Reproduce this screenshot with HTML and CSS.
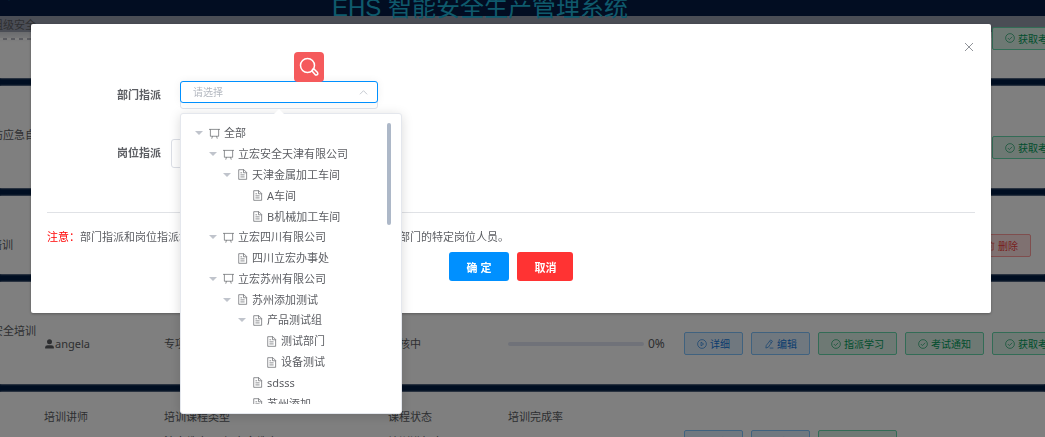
FILE: index.html
```html
<!DOCTYPE html>
<html lang="zh-CN">
  <head>
    <meta charset="UTF-8" />
    <title>EHS 智能安全生产管理系统</title>
    <link rel="stylesheet" href="styles.css" />
  </head>
  <body>
    <!-- shared icons -->
    <svg class="sprite" viewBox="0 0 16 16">
      <symbol id="i-board" viewBox="0 0 16 16"><path d="M0 2h16M2 2v10h12V2M5 12 4 15.500M11 12l1 3.500" /></symbol>
      <symbol id="i-doc" viewBox="0 0 16 16"><path d="M2.500 1h7.500L14 5v10H2.500zM9.500 1v4.500h4.500M5 5.500h2.500M5 8.500h6M5 11.500h6" /></symbol>
      <symbol id="i-play" viewBox="0 0 16 16"><circle cx="8" cy="8" r="7" /><path d="M6.500 5v6l4-3z" /></symbol>
      <symbol id="i-edit" viewBox="0 0 16 16"><path d="M10.500 1.500l3 2-6.500 9.500-4 1.500.500-4zM9 4l3 2M9 14.500h6" /></symbol>
      <symbol id="i-check" viewBox="0 0 16 16"><circle cx="8" cy="8" r="7" /><path d="M4.500 8l2.500 2.500L11.500 6" /></symbol>
      <symbol id="i-trash" viewBox="0 0 16 16"><path d="M1 3.500h14M5.500 3.500v-2h5v2M3 3.500v11h10v-11M6.500 6.500v5M9.500 6.500v5" /></symbol>
      <symbol id="i-user" viewBox="0 0 16 16"><circle cx="8" cy="4.500" r="4" /><path d="M1 15v-2q0-3 4-3h6q4 0 4 3v2z" /></symbol>
    </svg>

    <header class="header">
      <span class="header-user">培训管理</span>
      <h1 class="header-title">EHS 智能安全生产管理系统</h1>
    </header>

    <main class="course-list">
      <section class="card card-first">
        <div class="name">班组级安全</div>
        <div class="actions">
          <button class="btn blue"><svg><use href="#i-play" /></svg>详细</button>
          <button class="btn blue"><svg><use href="#i-edit" /></svg>编辑</button>
          <button class="btn green"><svg><use href="#i-check" /></svg>指派学习</button>
          <button class="btn green"><svg><use href="#i-check" /></svg>考试通知</button>
          <button class="btn green"><svg><use href="#i-check" /></svg>获取考题</button>
        </div>
      </section>

      <section class="card card-tall">
        <div class="name">消防应急自</div>
        <div class="label">培训讲师</div>
        <div class="label">培训课程类型</div>
        <div class="label">课程状态</div>
        <div class="label">培训完成率</div>
        <div class="value"><svg class="user"><use href="#i-user" /></svg>angela</div>
        <div class="value">专项培训</div>
        <div class="value">审核中</div>
        <div class="value"><span class="progress"></span><span class="percent">0%</span></div>
        <div class="actions">
          <button class="btn blue"><svg><use href="#i-play" /></svg>详细</button>
          <button class="btn blue"><svg><use href="#i-edit" /></svg>编辑</button>
          <button class="btn green"><svg><use href="#i-check" /></svg>指派学习</button>
          <button class="btn green"><svg><use href="#i-check" /></svg>考试通知</button>
          <button class="btn green"><svg><use href="#i-check" /></svg>获取考题</button>
        </div>
      </section>

      <section class="card">
        <div class="name name-short">培训</div>
        <div class="label">培训讲师</div>
        <div class="label">培训课程类型</div>
        <div class="label">课程状态</div>
        <div class="label">培训完成率</div>
        <div class="value"></div>
        <div class="value"></div>
        <div class="value"></div>
        <div class="value"></div>
        <div class="actions">
          <button class="btn blue"><svg><use href="#i-play" /></svg>详细</button>
          <button class="btn blue"><svg><use href="#i-edit" /></svg>编辑</button>
          <button class="btn green"><svg><use href="#i-check" /></svg>指派学习</button>
          <button class="btn green"><svg><use href="#i-check" /></svg>发布</button>
          <button class="btn red"><svg><use href="#i-trash" /></svg>删除</button>
        </div>
      </section>

      <section class="card card-tall">
        <div class="name">安全培训</div>
        <div class="label">培训讲师</div>
        <div class="label">培训课程类型</div>
        <div class="label">课程状态</div>
        <div class="label">培训完成率</div>
        <div class="value"><svg class="user"><use href="#i-user" /></svg>angela</div>
        <div class="value">专项培训</div>
        <div class="value">审核中</div>
        <div class="value"><span class="progress"></span><span class="percent">0%</span></div>
        <div class="actions">
          <button class="btn blue"><svg><use href="#i-play" /></svg>详细</button>
          <button class="btn blue"><svg><use href="#i-edit" /></svg>编辑</button>
          <button class="btn green"><svg><use href="#i-check" /></svg>指派学习</button>
          <button class="btn green"><svg><use href="#i-check" /></svg>考试通知</button>
          <button class="btn green"><svg><use href="#i-check" /></svg>获取考题</button>
        </div>
      </section>

      <section class="card">
        <div class="name"></div>
        <div class="label">培训讲师</div>
        <div class="label">培训课程类型</div>
        <div class="label">课程状态</div>
        <div class="label">培训完成率</div>
        <div class="value"><svg class="user"><use href="#i-user" /></svg>angela</div>
        <div class="value">法人教育/三级安全教育</div>
        <div class="value">培训进行中</div>
        <div class="value"><span class="progress"></span><span class="percent">0%</span></div>
        <div class="actions">
          <button class="btn blue"><svg><use href="#i-play" /></svg>详细</button>
          <button class="btn blue"><svg><use href="#i-edit" /></svg>编辑</button>
          <button class="btn green"><svg><use href="#i-check" /></svg>指派学习</button>
        </div>
      </section>
    </main>

    <div class="overlay">
      <div class="dialog" role="dialog" aria-label="指派学习">
        <button class="close" aria-label="关闭">
          <svg viewBox="0 0 10 10"><path d="M1 1l8 8M9 1L1 9" /></svg>
        </button>
        <form>
          <div class="form-row">
            <label for="dept">部门指派</label>
            <div class="dept-select">
              <input type="text" id="dept" role="combobox" aria-expanded="true" aria-controls="deptTree" placeholder="请选择" readonly />
              <svg class="arrow" viewBox="0 0 10 10"><path d="M1 7l4-4 4 4" /></svg>
              <button type="button" class="search" aria-label="搜索">
                <svg viewBox="0 0 20 20"><circle cx="8.500" cy="8.500" r="7" /><path d="M13.500 12.500l1-1 4 4q1 2-1 2.500h-1l-3.500-4z" /></svg>
              </button>

              <div class="dropdown">
                <div class="tree-wrap">
                  <ul class="tree" id="deptTree">
                    <li class="open"><svg><use href="#i-board" /></svg>全部</li>
                    <li class="open lv1"><svg><use href="#i-board" /></svg>立宏安全天津有限公司</li>
                    <li class="open lv2"><svg><use href="#i-doc" /></svg>天津金属加工车间</li>
                    <li class="lv3"><svg><use href="#i-doc" /></svg>A车间</li>
                    <li class="lv3"><svg><use href="#i-doc" /></svg>B机械加工车间</li>
                    <li class="open lv1"><svg><use href="#i-board" /></svg>立宏四川有限公司</li>
                    <li class="lv2"><svg><use href="#i-doc" /></svg>四川立宏办事处</li>
                    <li class="open lv1"><svg><use href="#i-board" /></svg>立宏苏州有限公司</li>
                    <li class="open lv2"><svg><use href="#i-doc" /></svg>苏州添加测试</li>
                    <li class="open lv3"><svg><use href="#i-doc" /></svg>产品测试组</li>
                    <li class="lv4"><svg><use href="#i-doc" /></svg>测试部门</li>
                    <li class="lv4"><svg><use href="#i-doc" /></svg>设备测试</li>
                    <li class="lv3"><svg><use href="#i-doc" /></svg>sdsss</li>
                    <li class="lv3"><svg><use href="#i-doc" /></svg>苏州添加</li>
                  </ul>
                  <span class="thumb"></span>
                </div>
              </div>
            </div>
          </div>
          <div class="form-row">
            <label for="post">岗位指派</label>
            <select id="post" class="post-select"><option value=""></option></select>
          </div>
          <hr />
          <p class="note"><span>注意：</span>部门指派和岗位指派均为必选项，选择完成后将会指派给所选择的部门的特定岗位人员。</p>
          <div class="footer">
            <button type="submit" class="ok">确 定</button>
            <button type="button" class="cancel">取消</button>
          </div>
        </form>
      </div>
    </div>
  </body>
</html>
```
FILE: styles.css
```css
* {
  box-sizing: border-box;
}
body {
  margin: 0;
  height: 100vh;
  overflow: hidden;
  background: #001d44;
  color: #5c5e63;
  font-family: "Noto Sans", "Noto Sans CJK SC", sans-serif;
  font-size: 11px;
  line-height: 16px;
}
button,
input,
select {
  font-family: inherit;
  margin: 0;
}
svg {
  fill: none;
  stroke: currentColor;
  flex: none;
}
.sprite {
  display: none;
}

/* header */
.header {
  position: relative;
  z-index: 1;
  display: flex;
  justify-content: center;
  height: 56px;
  margin-top: -40px;
  padding-right: 85px;
  background: #041a44;
  color: #1eb4d8;
}
.header-user {
  position: absolute;
  left: 4px;
  top: 27px;
}
.header-title {
  margin: 0;
  padding-top: 32px;
  font: 400 24px/32px "Liberation Sans", "Noto Sans CJK SC", sans-serif;
  white-space: nowrap;
}

/* course cards */
.course-list {
  display: flex;
  flex-direction: column;
  gap: 8px;
}
.card {
  display: grid;
  grid-template-columns: 44px 120px 224px 120px 176px auto;
  grid-template-rows: 16px 33px;
  padding: 17px 0 12px;
  background: #fff;
  box-shadow: 0 0 2px #fff;
  white-space: nowrap;
}
.card-tall {
  grid-template-rows: 16px 57px;
}
.card-first {
  display: flex;
  justify-content: space-between;
  height: 62px;
  padding: 1px 0 0;
  background: repeating-linear-gradient(90deg, #fff 0 3px, #b4b6c0 3px 7px, #fff 7px 8px) 0 22px / 100% 2px no-repeat,
    linear-gradient(#959aab 16px, #d4d6dc 16px, #fff 26px);
}
.card-first .actions {
  flex: none;
  width: 361px;
  height: 42px;
}
.name {
  grid-row: 1 / 3;
  display: flex;
  justify-content: flex-end;
  width: 36px;
  padding-top: 24px;
}
.card-first .name {
  padding-top: 0;
}
.name-short {
  width: 13px;
}
.label {
  grid-row: 1;
}
.value {
  grid-row: 2;
  display: flex;
  align-items: center;
}
.user {
  width: 11px;
  height: 10px;
  fill: currentColor;
  stroke: none;
}
.progress {
  width: 136px;
  height: 4px;
  border-radius: 2px;
  background: #e0e5f2;
}
.percent {
  margin-left: 4px;
  font-size: 12px;
}
.actions {
  grid-row: 2;
  grid-column: 6;
  display: flex;
  align-items: center;
  gap: 8px;
}
.btn {
  display: flex;
  flex: none;
  align-items: center;
  gap: 3px;
  height: 23px;
  padding: 0 12px;
  border: 1px solid;
  border-radius: 2px;
  font-size: 10px;
}
.btn svg {
  width: 10px;
  height: 10px;
}
.blue {
  color: #1278dc;
  background: #e0f0ff;
  border-color: #80c4ff;
}
.green {
  color: #009c5a;
  background: #dcf3e8;
  border-color: #66d9ac;
}
.red {
  color: #f04040;
  background: #ffe2e2;
  border-color: #ff9c9c;
}

/* dialog */
.overlay {
  position: fixed;
  inset: 0;
  z-index: 10;
  padding: 24px 54px 0 31px;
  background: rgba(0, 0, 0, 0.5);
}
.dialog {
  position: relative;
  padding: 57px 16px 32px;
  background: #fff;
  border-radius: 2px;
  box-shadow: 0 1px 3px rgba(0, 0, 0, 0.3);
}
.close {
  position: absolute;
  top: 16px;
  right: 17px;
  padding: 0;
  border: 0;
  background: none;
  color: #909399;
}
.close svg {
  display: block;
  width: 10px;
  height: 14px;
}
.form-row {
  display: flex;
  align-items: flex-start;
  height: 29px;
  margin-bottom: 29px;
}
.form-row label {
  width: 114px;
  padding-top: 6px;
  font-weight: 700;
  text-align: right;
}
.dept-select {
  position: relative;
  width: 198px;
  height: 28px;
  margin-left: 19px;
  border: 1px solid #dfe4ed;
  border-radius: 3px;
}
.dept-select input {
  display: block;
  width: 198px;
  height: 22px;
  margin: -1px;
  padding: 0 12px;
  border: 1px solid #0090ff;
  border-radius: 3px;
  outline: none;
  font-size: 10px;
  box-shadow: 0 0 8px rgba(0, 0, 0, 0.06);
}
.dept-select input::placeholder {
  color: #b4b8c0;
}
.arrow {
  position: absolute;
  top: 6px;
  right: 9px;
  width: 9px;
  height: 9px;
  color: #c0c4cc;
}
.search {
  position: absolute;
  left: 113px;
  bottom: 26px;
  width: 30px;
  height: 30px;
  padding: 5px;
  border: 0;
  border-radius: 4px;
  background: #f55a5c;
  color: #fff;
}
.search svg {
  display: block;
  width: 20px;
  height: 20px;
  stroke-width: 1.5;
}
.post-select {
  width: 198px;
  height: 29px;
  margin-left: 10px;
  border: 1px solid #dcdfe6;
  border-radius: 3px;
  background: #fff;
}

/* department tree */
.dropdown {
  position: absolute;
  top: 31px;
  left: -1px;
  z-index: 5;
  width: 222px;
  padding: 9px;
  border: 1px solid #e4e7ed;
  border-radius: 3px;
  background: #fff;
  box-shadow: 0 2px 12px rgba(0, 0, 0, 0.15);
}
.dropdown::before {
  content: "";
  position: absolute;
  top: -5px;
  left: 93px;
  border: 5px solid transparent;
  border-top: 0;
  border-bottom-color: #fff;
}
.tree-wrap {
  position: relative;
  height: 281px;
  overflow: hidden;
}
.tree {
  display: grid;
  grid-auto-rows: 1fr;
  height: 291px;
  margin: 0;
  padding: 0 0 0 5px;
  list-style: none;
}
.tree li {
  display: flex;
  align-items: center;
}
.tree li::before {
  content: "";
  width: 8px;
  margin-right: 6px;
}
.tree .open::before {
  width: 0;
  border: 4px solid transparent;
  border-width: 4px 4px 0;
  border-top-color: #c0c4cc;
}
.tree svg {
  width: 11px;
  height: 11px;
  margin-right: 4px;
}
.tree .lv1 {
  padding-left: 14px;
}
.tree .lv2 {
  padding-left: 28px;
}
.tree .lv3 {
  padding-left: 43px;
}
.tree .lv4 {
  padding-left: 57px;
}
.thumb {
  position: absolute;
  top: 0;
  right: 1px;
  width: 4px;
  height: 102px;
  border-radius: 2px;
  background: #adb8c8;
}

hr {
  margin: 44px 0 16px;
  border: 0;
  border-top: 1px solid #e0e2e6;
}
.note {
  margin: 0;
}
.note span {
  color: #f00;
}
.footer {
  display: flex;
  justify-content: center;
  gap: 8px;
  margin-top: 7px;
}
.footer button {
  height: 29px;
  padding: 0 17px;
  border: 0;
  border-radius: 3px;
  color: #fff;
  font-size: 11px;
  font-weight: 700;
}
.footer .ok {
  padding: 0 18px;
  background: #0090ff;
}
.footer .cancel {
  background: #ff3333;
}
```
